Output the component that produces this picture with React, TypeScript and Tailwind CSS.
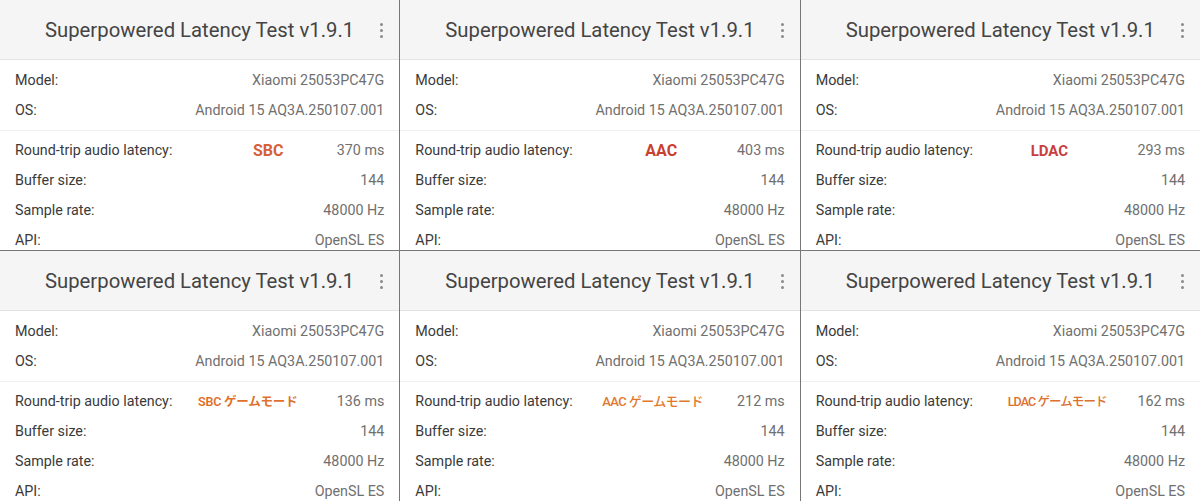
type Codec = {
  text: string;
  className: string;
};

type PanelData = {
  latency: string;
  codec: Codec;
};

const panels: PanelData[] = [
  { latency: '370 ms', codec: { text: 'SBC', className: 'left-[253px] text-[16px] font-bold text-[#d6603a]' } },
  { latency: '403 ms', codec: { text: 'AAC', className: 'left-[245px] text-[16px] font-bold text-[#c9402f]' } },
  { latency: '293 ms', codec: { text: 'LDAC', className: 'left-[230px] text-[15px] font-bold text-[#c83f3f]' } },
  {
    latency: '136 ms',
    codec: { text: 'SBC ゲームモード', className: 'left-[198px] text-[12.5px] font-semibold text-[#e0702c] tracking-[-0.2px]' },
  },
  {
    latency: '212 ms',
    codec: { text: 'AAC ゲームモード', className: 'left-[202px] text-[13px] font-medium text-[#e2782e] tracking-[-0.6px]' },
  },
  {
    latency: '162 ms',
    codec: { text: 'LDAC ゲームモード', className: 'left-[207px] text-[12.5px] font-medium text-[#de6f2e] tracking-[-0.9px]' },
  },
];

function Row({ label, value, children }: { label: string; value: string; children?: React.ReactNode }) {
  return (
    <div className="relative flex h-[30px] items-center justify-between px-[15px] text-[14.3px]">
      <span className="text-[#3a3a3a]">{label}</span>
      {children}
      <span className="text-[#707070]">{value}</span>
    </div>
  );
}

function Panel({ latency, codec }: Readonly<PanelData>) {
  return (
    <div className="h-[250px] overflow-hidden bg-white">
      <div className="flex h-[60px] items-center border-b border-[#e3e3e3] bg-[#f5f5f5] pl-[45px] pr-[16px] pt-[2px]">
        <span className="text-[20.3px] text-[#444]">Superpowered Latency Test v1.9.1</span>
        <div className="ml-auto flex flex-col gap-[3px]">
          <span className="h-[3px] w-[3px] rounded-full bg-[#8a8a8a]" />
          <span className="h-[3px] w-[3px] rounded-full bg-[#8a8a8a]" />
          <span className="h-[3px] w-[3px] rounded-full bg-[#8a8a8a]" />
        </div>
      </div>
      <div className="pt-[6px]">
        <Row label="Model:" value="Xiaomi 25053PC47G" />
        <Row label="OS:" value="Android 15 AQ3A.250107.001" />
        <div className="mb-[5px] mt-[4px] h-px bg-[#efefef]" />
        <Row label="Round-trip audio latency:" value={latency}>
          <span
            className={`absolute top-1/2 -translate-y-1/2 font-['Roboto','Noto_Sans_CJK_JP',sans-serif] ${codec.className}`}>
            {codec.text}
          </span>
        </Row>
        <Row label="Buffer size:" value="144" />
        <Row label="Sample rate:" value="48000 Hz" />
        <Row label="API:" value="OpenSL ES" />
      </div>
    </div>
  );
}

export default function App() {
  return (
    <div className="grid h-[501px] w-[1200px] grid-cols-3 gap-px bg-[#777] font-['Roboto','Noto_Sans_CJK_JP',sans-serif]">
      {panels.map((p, i) => (
        <Panel key={i} {...p} />
      ))}
    </div>
  );
}
